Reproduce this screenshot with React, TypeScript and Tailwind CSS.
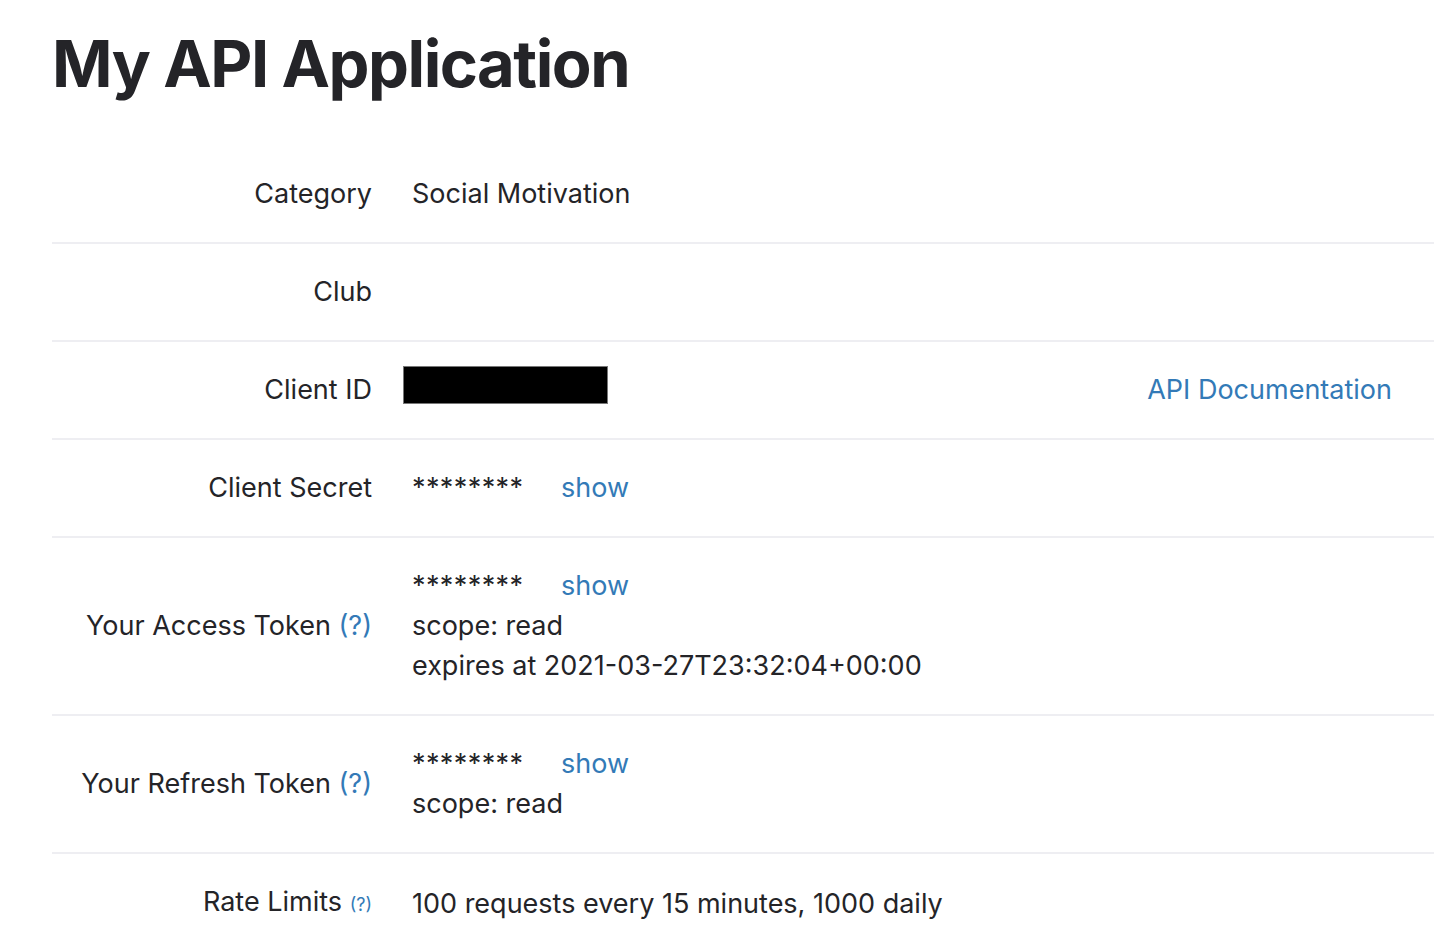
const Help = ({ small }: { small?: boolean }) => (
  <span className={small ? "text-[18px] text-[#337ab7]" : "text-[#337ab7]"}>(?)</span>
);

const Masked = () => (
  <div className="flex items-baseline">
    <span className="w-[110px] tracking-[0.4px]">********</span>
    <a className="ml-[39px] text-[#337ab7]">show</a>
  </div>
);

const rows: { label: React.ReactNode; value: React.ReactNode }[] = [
  { label: "Category", value: "Social Motivation" },
  { label: "Club", value: "" },
  {
    label: "Client ID",
    value: (
      <div className="flex items-center justify-between pr-[42px]">
        <div className="-ml-[9px] -mt-[10px] h-[38px] w-[205px] border border-[#777] bg-black" />
        <a className="text-[#337ab7]">API Documentation</a>
      </div>
    ),
  },
  { label: "Client Secret", value: <Masked /> },
  {
    label: (
      <>
        Your Access Token <Help />
      </>
    ),
    value: (
      <>
        <Masked />
        <div>scope: read</div>
        <div>expires at 2021-03-27T23:32:04+00:00</div>
      </>
    ),
  },
  {
    label: (
      <>
        Your Refresh Token <Help />
      </>
    ),
    value: (
      <>
        <Masked />
        <div>scope: read</div>
      </>
    ),
  },
  {
    label: (
      <>
        Rate Limits <Help small />
      </>
    ),
    value: "100 requests every 15 minutes, 1000 daily",
  },
];

export default function App() {
  return (
    <div className="min-h-screen bg-white pl-[52px] text-[#242428] [font-family:Inter,'Noto_Sans',sans-serif]">
      <h1 className="pt-[26px] text-[65px] font-bold leading-[76px] tracking-[-1.5px]">
        My API Application
      </h1>
      <div className="mt-[44px] flex flex-col">
        {rows.map((r, i) => (
          <div
            key={i}
            className="flex min-h-[98px] items-center border-b-2 border-[#eeeef2] py-[28px] text-[27px] leading-[40px]"
          >
            <div className="w-[340px] shrink-0 pr-[20px] text-right">{r.label}</div>
            <div className="flex-1 pl-[20px]">{r.value}</div>
          </div>
        ))}
      </div>
    </div>
  );
}
